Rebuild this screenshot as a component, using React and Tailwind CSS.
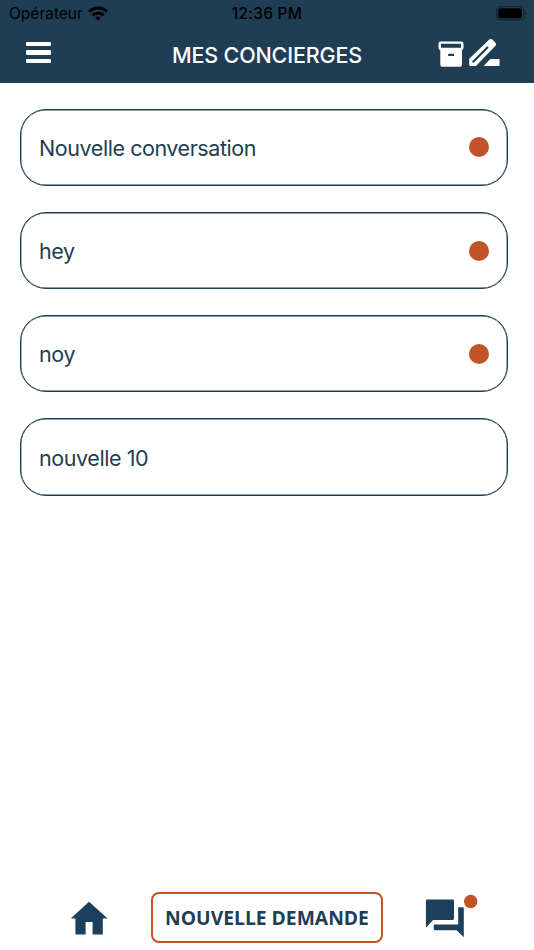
const conversations = [
  { title: 'Nouvelle conversation', unread: true },
  { title: 'hey', unread: true },
  { title: 'noy', unread: true },
  { title: 'nouvelle 10', unread: false },
];

function WifiIcon() {
  return (
    <svg className="-mt-px ml-[5px] h-[15px] w-5" viewBox="0 0 20 15" fill="none" stroke="#000" strokeWidth="3">
      <path d="M1.2 5.6a12.6 12.6 0 0 1 17.6 0" />
      <path d="M4.5 9.3a7.9 7.9 0 0 1 11 0" />
      <path d="M10 14.8l-2.9-2.9a4.1 4.1 0 0 1 5.8 0z" fill="#000" stroke="none" />
    </svg>
  );
}

function BatteryIcon() {
  return (
    <svg className="h-[15px] w-[31px]" viewBox="0 0 31 15">
      <rect x="0.7" y="0.7" width="27" height="13.2" rx="3.8" fill="none" stroke="#132636" strokeWidth="1.2" />
      <rect x="2.3" y="2.3" width="23.6" height="10" rx="2.3" fill="#000" />
      <path d="M29.1 5.2q1.6.7 1.6 2.2t-1.6 2.2z" fill="#132636" />
    </svg>
  );
}

function ArchiveIcon() {
  return (
    <svg className="h-[26px] w-[26px]" viewBox="0 0 26 26">
      <path
        fill="#fff"
        fillRule="evenodd"
        d="M2.7.5h20.6A2.2 2.2 0 0 1 25.5 2.7v4.2a2 2 0 0 1-1.5 2v14.3a2.6 2.6 0 0 1-2.6 2.6H4.9a2.6 2.6 0 0 1-2.6-2.6V8.9A2 2 0 0 1 .5 6.9V2.7A2.2 2.2 0 0 1 2.7.5zM3 2.7v4h20v-4zM10.8 12.7a.7.7 0 0 0-.7.7v1a.7.7 0 0 0 .7.7h4.6a.7.7 0 0 0 .7-.7v-1a.7.7 0 0 0-.7-.7z"
      />
    </svg>
  );
}

function PencilIcon() {
  return (
    <svg className="ml-[4px] h-[28px] w-8" viewBox="0 0 32 28">
      <path
        fill="#fff"
        d="M21 .8q1.8-1.6 3.6 0l2.6 2.6q1.8 1.8 0 3.6L8 26.9H2Q1.2 26.9 1.2 26.1V19.8z"
      />
      <path d="M4.7 23.3L20 8" stroke="#1f3d53" strokeWidth="2.2" />
      <path fill="#fff" d="M15.6 26.9l6.6-7h9.3v7z" />
    </svg>
  );
}

function ConversationRow({ title, unread }) {
  return (
    <button className="flex h-[77.4px] w-full items-center justify-between rounded-[26px] border border-[#1f3d53] bg-white px-[18px] text-left shadow-[inset_0_0_0_0.4px_#1f3d53]">
      <span className="mt-[1.4px] ml-[0.5px] text-[21.5px] leading-7 tracking-[-0.44px] text-[#1f3d53]">{title}</span>
      {unread && <span className="size-5 rounded-full bg-[#c25328]" />}
    </button>
  );
}

export default function App() {
  return (
    <div className="flex h-[950px] w-[534px] flex-col overflow-hidden bg-white font-['Inter',sans-serif]">
      <header className="h-[82.7px] shrink-0 bg-[#1f3d53]">
        <div className="grid h-7 grid-cols-[1fr_auto_1fr] items-center pr-[7px] pl-[9px] text-black">
          <div className="flex items-center">
            <span className="text-[15.5px] leading-5">Opérateur</span>
            <WifiIcon />
          </div>
          <span className="-ml-[2px] text-center text-[15.5px] leading-5 font-medium tracking-[0.25px]">12:36 PM</span>
          <div className="-mt-px flex justify-end">
            <BatteryIcon />
          </div>
        </div>
        <div className="grid h-[52px] grid-cols-[1fr_auto_1fr] items-center pr-[34px] pl-[34px]">
          <button aria-label="Menu" className="-mt-[3px] -ml-2 flex w-[25px] flex-col gap-1">
            <span className="h-[4.4px] rounded-[1px] bg-white" />
            <span className="h-[4.4px] rounded-[1px] bg-white" />
            <span className="h-[4.4px] rounded-[1px] bg-white" />
          </button>
          <h1 className="mt-px text-[21.5px] leading-7 font-medium tracking-[-0.15px] text-white">MES CONCIERGES</h1>
          <div className="-mt-[3px] flex items-center justify-end">
            <div className="mt-[2px]">
              <ArchiveIcon />
            </div>
            <PencilIcon />
          </div>
        </div>
      </header>

      <main className="flex flex-1 flex-col gap-[25.8px] pt-[26px] pr-[26px] pl-[19.6px]">
        {conversations.map((item) => (
          <ConversationRow key={item.title} {...item} />
        ))}
      </main>

      <nav className="flex h-[59px] shrink-0 items-start pl-[70px]">
        <svg className="mt-[10px] h-[34px] w-[38px]" viewBox="0 0 38 34" fill="#1c3f5e">
          <path d="M19 .8L.7 17.5h4.7v16.1h10.2V21h7v12.6h10.2V17.5h4.8z" />
        </svg>
        <button className="mt-[0.5px] ml-[43px] flex h-[51.5px] w-[232px] items-center justify-center rounded-[8px] border-2 border-[#c25328] bg-white pt-[2px] font-['Open_Sans',sans-serif] text-[19.3px] font-bold whitespace-nowrap text-[#1f3d53]">
          NOUVELLE DEMANDE
        </button>
        <svg className="mt-[3px] ml-[42px] h-[46px] w-[54px]" viewBox="0 0 54 46">
          <path fill="#1c3f5e" d="M2.4 5.5h25.2a1.4 1.4 0 0 1 1.4 1.4v17.7a1.4 1.4 0 0 1-1.4 1.4H8.1L.9 33.8V6.9a1.4 1.4 0 0 1 1.5-1.4z" />
          <path fill="#1c3f5e" d="M33.2 13.3h4.2a1.4 1.4 0 0 1 1.4 1.4v28.6l-7.2-7H10.1a1.4 1.4 0 0 1-1.4-1.4v-4.3h24.5z" />
          <circle cx="45.7" cy="7.5" r="6.7" fill="#c25328" />
        </svg>
      </nav>
    </div>
  );
}
